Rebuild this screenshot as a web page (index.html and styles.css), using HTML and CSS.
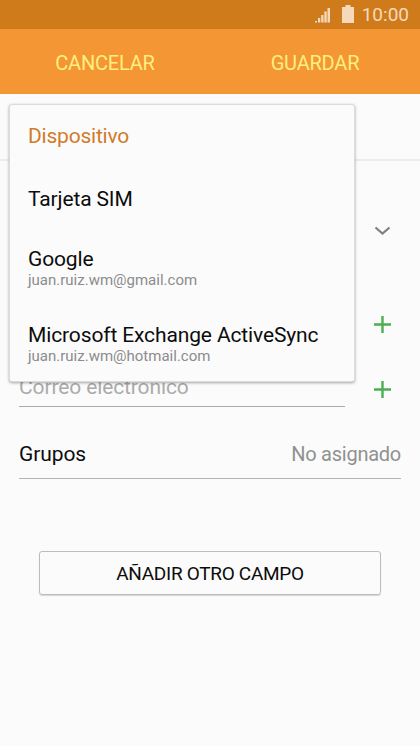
FILE: index.html
```
<!DOCTYPE html>
<html lang="es">
<head>
  <meta charset="UTF-8">
  <meta name="viewport" content="width=device-width, initial-scale=1">
  <title>Crear contacto</title>
  <link rel="stylesheet" href="styles.css">
</head>
<body>
  <div class="status-bar">
    <svg class="signal" width="17" height="16" viewBox="0 0 17 16">
      <path d="M1 14h2v1.500H1zM4 11h2.300v4.500H4zM7.200 8h2.300v7.500H7.200zM10.300 4.500h2.400v11h-2.400zM13.500 1H16v14.500h-2.500z"/>
    </svg>
    <svg class="battery" width="12" height="18" viewBox="0 0 12 18">
      <path d="M3.500 0h5v2H12v16H0V2h3.500z"/>
    </svg>
    <span class="clock">10:00</span>
  </div>

  <header class="action-bar">
    <button class="cancel">CANCELAR</button>
    <button class="save">GUARDAR</button>
  </header>

  <main>
    <div class="account">
      <ul class="account-menu">
        <li class="selected"><span class="name">Dispositivo</span></li>
        <li><span class="name">Tarjeta SIM</span></li>
        <li class="two-lines"><span class="name">Google</span><span class="mail">juan.ruiz.wm@gmail.com</span></li>
        <li class="two-lines"><span class="name">Microsoft Exchange ActiveSync</span><span class="mail">juan.ruiz.wm@hotmail.com</span></li>
      </ul>
    </div>

    <div class="row name-row">
      <svg class="icon" width="17" height="17" viewBox="0 0 17 17">
        <path class="chevron" d="M1.500 5.500l7 6 7-6"/>
      </svg>
    </div>
    <div class="row">
      <svg class="icon" width="17" height="17" viewBox="0 0 17 17">
        <path class="plus" d="M8.500 0v17M0 8.500h17"/>
      </svg>
    </div>
    <div class="row">
      <div class="field"><span class="placeholder">Correo electrónico</span></div>
      <svg class="icon" width="17" height="17" viewBox="0 0 17 17">
        <path class="plus" d="M8.500 0v17M0 8.500h17"/>
      </svg>
    </div>
    <div class="groups">
      <span class="groups-label">Grupos</span>
      <span class="value">No asignado</span>
    </div>

    <button class="add-field">AÑADIR OTRO CAMPO</button>
  </main>
</body>
</html>
```
FILE: styles.css
```
* {
  box-sizing: border-box;
}

body {
  margin: 0;
  min-height: 100vh;
  background: #fbfbfb;
  color: #0c0c0c;
  font-family: Roboto, "Liberation Sans", sans-serif;
  font-size: 20px;
}

button {
  padding: 0;
  border: none;
  background: none;
  font: inherit;
}

.status-bar {
  display: flex;
  justify-content: flex-end;
  align-items: center;
  height: 29px;
  padding-right: 11px;
  background: #d07b1b;
  color: #f6d9bb;
}

.status-bar svg {
  fill: #f6d9bb;
}

.signal {
  margin-top: 1px;
}

.battery {
  margin: 0 8px 2px 11px;
}

.clock {
  font-size: 19px;
}

.action-bar {
  display: flex;
  height: 65px;
  padding-top: 2px;
  background: #f39633;
}

.action-bar button {
  flex: 1;
  color: #ffef80;
  letter-spacing: -0.2px;
}

.account {
  position: relative;
  height: 67px;
  border-bottom: 2px solid #ececec;
}

.account-menu {
  position: absolute;
  top: 10px;
  left: 9px;
  width: 346px;
  height: 278px;
  margin: 0;
  padding: 0;
  list-style: none;
  background: #fbfbfb;
  border: 1px solid #dcdcdc;
  border-radius: 3px;
  box-shadow: 0 1px 3px rgba(0, 0, 0, 0.35);
}

.account-menu li {
  display: flex;
  flex-direction: column;
  justify-content: center;
  height: 63px;
  padding: 0 0 2px 18px;
}

.account-menu .two-lines {
  height: 76px;
}

.name {
  font-size: 21px;
  line-height: 24px;
  letter-spacing: -0.13px;
  white-space: nowrap;
}

.selected {
  color: #d07b2b;
}

.selected .name {
  letter-spacing: -0.22px;
}

.mail {
  color: #8c8c8c;
  font-size: 15px;
  line-height: 18px;
}

.row {
  display: flex;
  justify-content: flex-end;
  height: 65px;
  padding: 0 29px 0 19px;
}

.name-row {
  height: 70px;
  margin: 34px 0 27px;
}

.field {
  display: flex;
  align-items: flex-end;
  flex: 1;
  height: 50px;
  margin-right: 29px;
  padding-bottom: 7px;
  border-bottom: 1px solid #aaa;
}

.placeholder {
  color: #ababab;
  font-size: 21px;
  letter-spacing: -0.12px;
}

.icon {
  align-self: center;
  fill: none;
}

.chevron {
  stroke: #808080;
  stroke-width: 2.2;
}

.plus {
  stroke: #4caf50;
  stroke-width: 2.4;
}

.groups {
  display: flex;
  justify-content: space-between;
  align-items: center;
  height: 51px;
  margin: 6px 19px 0;
  padding-top: 1px;
  border-bottom: 1px solid #b4b4b4;
}

.groups-label {
  font-size: 21px;
  letter-spacing: -0.1px;
}

.value {
  color: #919191;
  letter-spacing: -0.25px;
}

.add-field {
  display: block;
  width: 342px;
  height: 44px;
  margin: 72px auto 0;
  border: 1px solid #bcbcbc;
  border-radius: 3px;
  box-shadow: 0 1px 1px rgba(0, 0, 0, 0.15);
  color: #0c0c0c;
  font-size: 19px;
  letter-spacing: -0.3px;
}
```
